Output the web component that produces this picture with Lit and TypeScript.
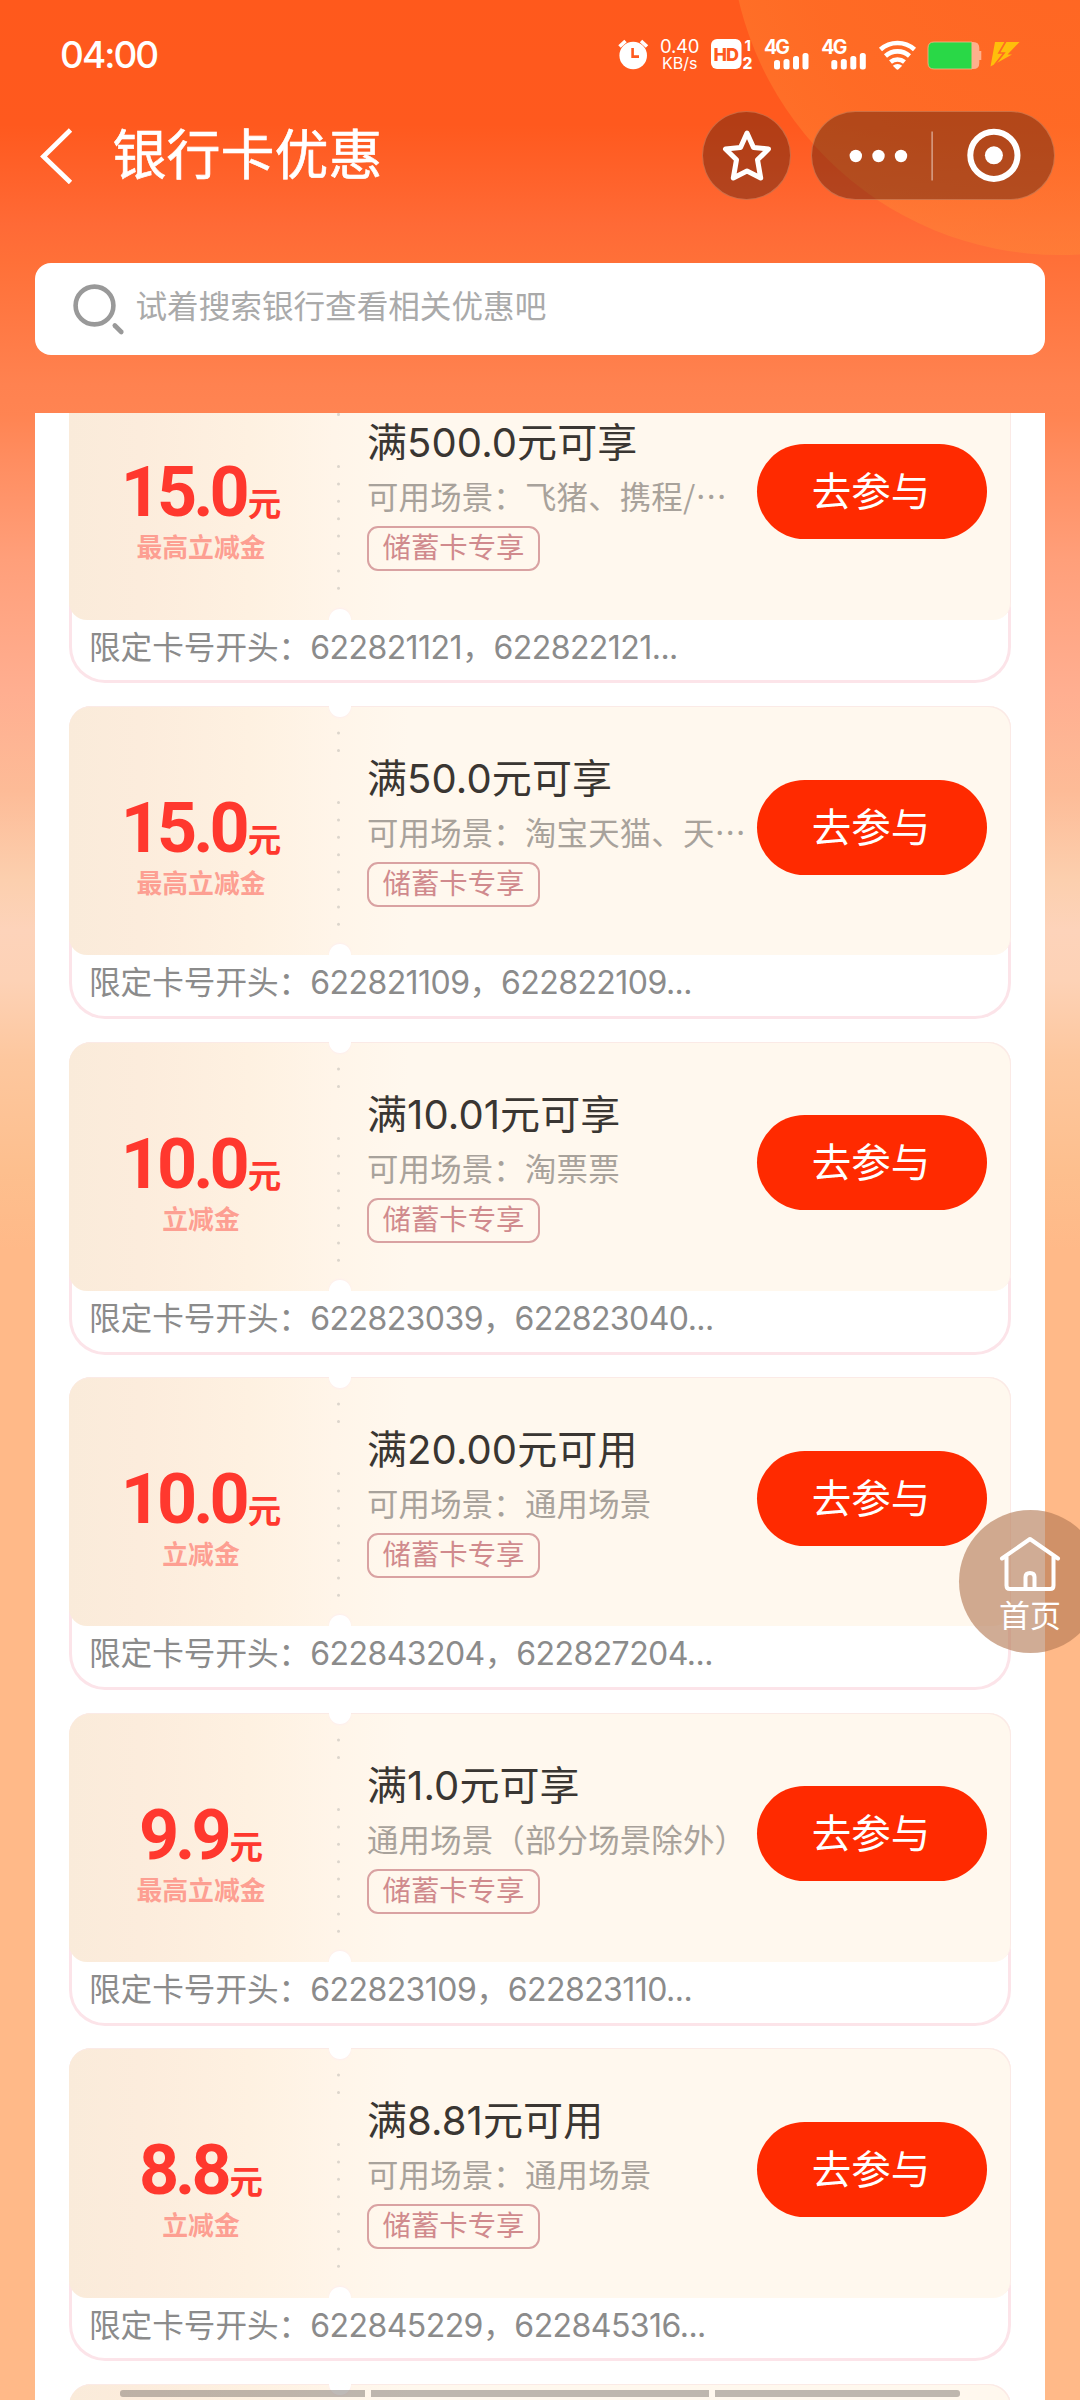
import { LitElement, html, css, svg } from "lit";
import { customElement, property } from "lit/decorators.js";

interface Coupon {
  amount: string;
  label: string;
  title: string;
  scene: string;
  cards: string;
}

const coupons: Coupon[] = [
  { amount: "15.0", label: "最高立减金", title: "满500.0元可享", scene: "可用场景：飞猪、携程/…", cards: "622821121，622822121..." },
  { amount: "15.0", label: "最高立减金", title: "满50.0元可享", scene: "可用场景：淘宝天猫、天…", cards: "622821109，622822109..." },
  { amount: "10.0", label: "立减金", title: "满10.01元可享", scene: "可用场景：淘票票", cards: "622823039，622823040..." },
  { amount: "10.0", label: "立减金", title: "满20.00元可用", scene: "可用场景：通用场景", cards: "622843204，622827204..." },
  { amount: "9.9", label: "最高立减金", title: "满1.0元可享", scene: "通用场景（部分场景除外）", cards: "622823109，622823110..." },
  { amount: "8.8", label: "立减金", title: "满8.81元可用", scene: "可用场景：通用场景", cards: "622845229，622845316..." },
];

const dotRows = [27, 44.4, 96.5, 113.9, 131.3, 148.7, 166.1, 183.5, 200.9, 218.3];

@customElement("coupon-card")
export class CouponCard extends LitElement {
  @property({ attribute: false }) coupon?: Coupon;

  static styles = css`
    :host {
      display: block;
      flex: none;
      height: 313px;
      box-sizing: border-box;
      border-radius: 22px 22px 36px 36px;
      background: #fff;
      box-shadow: inset 0 0 0 3px #fce4e9;
    }
    .ticket {
      position: relative;
      display: flex;
      height: 249.3px;
      border-radius: 22px 22px 18px 18px;
      background: linear-gradient(90deg, #faebda 0, #fcecdc 70px, #fef1e1 180px, #fff5e9 265px, #fff8ee 340px, #fff8ee 100%);
      box-shadow: inset -1px 1px 0 #fbeae6;
    }
    .ticket::before,
    .ticket::after {
      content: "";
      position: absolute;
      left: 260px;
      width: 22px;
      height: 11px;
      background: #fff;
    }
    .ticket::before { top: 0; border-radius: 0 0 11px 11px; box-shadow: 0 1px 2px #fdeeee; }
    .ticket::after { bottom: 0; border-radius: 11px 11px 0 0; box-shadow: 0 -1px 2px #fdeeee; }
    .value {
      width: 264px;
      flex: none;
      display: flex;
      flex-direction: column;
      align-items: center;
      padding-top: 86px;
      box-sizing: border-box;
    }
    .amount {
      display: flex;
      align-items: baseline;
      height: 72px;
      color: #ff382e;
      font: 700 70px/72px Roboto, "Noto Sans CJK SC", sans-serif;
      letter-spacing: -4px;
    }
    .yuan { font: 700 33.5px/72px "Noto Sans CJK SC", sans-serif; letter-spacing: 0; margin-left: 2px; }
    .label {
      font: 700 25.8px/40px Inter, "Noto Sans CJK SC", sans-serif;
      color: #fd9f92;
    }
    .perf { width: 10px; flex: none; margin-right: 24px; }
    .info {
      flex: 1;
      min-width: 0;
      display: flex;
      flex-direction: column;
      align-items: flex-start;
      padding-top: 48px;
      white-space: nowrap;
    }
    .title { font: 400 40px/50px Inter, "Noto Sans CJK SC", sans-serif; color: #3a3632; letter-spacing: 0.1px; }
    .scene { font: 400 31.4px/46px "Noto Sans CJK SC", sans-serif; color: #a8a29b; margin-top: 5px; letter-spacing: 0.2px; }
    .tag {
      margin-top: 7px;
      height: 45px;
      width: 173px;
      box-sizing: border-box;
      border: 2px solid #d9a2a2;
      border-radius: 11px;
      text-align: center;
      font: 400 28.4px/40px Inter, "Noto Sans CJK SC", sans-serif;
      color: #d08a8d;
    }
    .join {
      flex: none;
      margin: 73.6px 23.5px 0 0;
      width: 230px;
      height: 95px;
      border: 0;
      padding: 1px 2px 0 0;
      border-radius: 47.5px;
      background: #ff2a00;
      color: #fff;
      font: 400 39.5px/94px Inter, "Noto Sans CJK SC", sans-serif;
    }
    .foot {
      padding-left: 20px;
      font: 400 31.6px/56px Inter, "Noto Sans CJK SC", sans-serif;
      color: #8b8b8b;
      white-space: nowrap;
    }
    .num { font-size: 32px; letter-spacing: -0.55px; }
  `;

  render() {
    const c = this.coupon;
    if (!c) return html`<div class="ticket"></div>`;
    return html`
      <div class="ticket">
        <div class="value">
          <div class="amount">${c.amount}<span class="yuan">元</span></div>
          <div class="label">${c.label}</div>
        </div>
        <svg class="perf" viewBox="0 0 10 249" width="10" height="249">
          ${dotRows.map((y) => svg`<circle cx="5.5" cy=${y} r="1.5" fill="#dcd5cc" />`)}
        </svg>
        <div class="info">
          <div class="title">${c.title}</div>
          <div class="scene">${c.scene}</div>
          <div class="tag">储蓄卡专享</div>
        </div>
        <button class="join">去参与</button>
      </div>
      <div class="foot">限定卡号开头：<span class="num">${c.cards}</span></div>
    `;
  }
}

@customElement("app-root")
export class AppRoot extends LitElement {
  static styles = css`
    :host {
      display: block;
      position: relative;
      width: 1080px;
      height: 2400px;
      overflow: hidden;
      font-family: Inter, "Noto Sans CJK SC", sans-serif;
      background: linear-gradient(180deg, #ff591c 0, #ff591e 125px, #ff6a36 225px, #ff7038 262px, #ff8250 385px, #ff8452 415px, #ff8d60 460px, #ff9f7a 560px, #ffae90 690px, #fdbb97 790px, #fccfae 880px, #fdd3ba 930px, #fdd2b6 980px, #fdc79e 1060px, #fdbf8e 1170px, #ffb988 1250px, #ffb988 100%);
    }
    .glow {
      position: absolute;
      top: -405px;
      left: 730px;
      width: 660px;
      height: 660px;
      border-radius: 50%;
      background: radial-gradient(circle, rgba(255, 130, 50, 0.3) 0, rgba(255, 135, 50, 0.38) 55%, rgba(255, 150, 60, 0.46) 100%);
    }
    .page { position: relative; display: flex; flex-direction: column; height: 2400px; }
    .status {
      display: flex;
      justify-content: space-between;
      height: 108px;
      padding: 0 0 0 60px;
      color: #fff;
      flex: none;
    }
    .clock { font-size: 37px; font-weight: 500; line-height: 109px; letter-spacing: -2px; }
    .icons { display: block; }
    .nav { display: flex; align-items: center; height: 95px; padding: 0 25px 0 38px; flex: none; color: #fff; }
    .heading { flex: 1; font-size: 54px; line-height: 80px; margin: 0 0 0 36.5px; font-weight: 400; -webkit-text-stroke: 0.6px #fff; }
    .round, .capsule {
      height: 89px;
      box-sizing: border-box;
      border: 1px solid rgba(255, 190, 150, 0.35);
      background: rgba(75, 25, 10, 0.42);
      border-radius: 45px;
      display: flex;
      align-items: center;
      justify-content: center;
    }
    .round { width: 89px; margin-right: 19.5px; }
    .capsule { width: 244.5px; }
    .search {
      flex: none;
      display: flex;
      align-items: center;
      height: 92px;
      margin: 60px 35px 58px;
      padding-left: 36px;
      box-sizing: border-box;
      background: #fff;
      border-radius: 16px;
      font-size: 31.6px;
      color: #aaa;
    }
    .hint { margin-left: 8.5px; line-height: 40px; padding-bottom: 4px; }
    .panel { flex: 1; min-height: 0; margin: 0 35px; background: #fff; overflow: hidden; }
    .list { display: flex; flex-direction: column; gap: 22.6px; margin: -42.6px 34.5px 0 34px; }
    .home {
      position: absolute;
      left: 959px;
      top: 1510px;
      width: 143px;
      height: 143px;
      border-radius: 50%;
      background: rgba(179, 121, 84, 0.62);
      color: #fff;
      display: flex;
      flex-direction: column;
      align-items: center;
      padding: 24px 1px 0 0;
      box-sizing: border-box;
      font-size: 31px;
      line-height: 44px;
    }
    .gesture { position: absolute; left: 120px; top: 2390px; display: flex; gap: 6px; }
    .gesture i { height: 7px; width: 245px; background: rgba(125, 118, 112, 0.5); }
    .gesture i:first-child { border-radius: 3px 0 0 3px; }
    .gesture i:last-child { border-radius: 0 3px 3px 0; }
    .gesture .mid { width: 338px; }
    .icons text { font-family: Inter, sans-serif; }
  `;

  private signal(x: number) {
    return svg`<g transform="translate(${x} 0)">
      <text x="-1" y="53.5" font-size="19.5" font-weight="700" textLength="26">4G</text>
      <rect x="9" y="60" width="6" height="9.5" rx="2.5" />
      <rect x="18.5" y="59" width="6" height="10.5" rx="2.5" />
      <rect x="28" y="56" width="6" height="13.5" rx="2.5" />
      <rect x="37.5" y="53" width="6" height="16.5" rx="2.5" />
    </g>`;
  }

  render() {
    return html`
      <div class="glow"></div>
      <div class="page">
        <div class="status">
          <div class="clock">04:00</div>
          <svg class="icons" width="480" height="108" viewBox="600 0 480 108" fill="#fff">
            <circle cx="633.2" cy="55.5" r="13.8" />
            <path d="M619.5 46.5l6-5.500M647 46.5l-6-5.500" stroke="#fff" stroke-width="3.6" />
            <path d="M632.6 48v8.6h6.4" fill="none" stroke="#ff5a1e" stroke-width="2.6" />
            <text x="660" y="53" font-size="18.5" font-weight="400" textLength="39.5">0.40</text>
            <text x="662" y="69" font-size="16" font-weight="400" textLength="35.5">KB/s</text>
            <rect x="711" y="39" width="30.5" height="30" rx="6" />
            <text x="713.5" y="60.5" font-size="18" font-weight="800" textLength="25.5" style="fill:#ff5a1e">HD</text>
            <text x="744.5" y="51" font-size="15" font-weight="700">1</text>
            <text x="742.5" y="68.5" font-size="15.5" font-weight="800">2</text>
            ${this.signal(765)}${this.signal(822.3)}
            <g fill="none" stroke="#fff" stroke-width="4.6">
              <path d="M880.500 49.500a25.500 25.500 0 0 1 34 0" />
              <path d="M885.500 56a18 18 0 0 1 24 0" />
              <path d="M890.500 62a11 11 0 0 1 14 0" />
            </g>
            <path d="M892.800 65.800a7 7 0 0 1 9.400 0l-3.400 3.300q-1.300 1.200-2.600 0z" />
            <path d="M934 42h38v27h-38q-6 0-6-6v-15q0-6 6-6z" fill="#29d847" stroke="#f5b78a" stroke-width=".8" />
            <path d="M971.800 42h1.500q6 0 6 6v3h2v9h-2v3q0 6-6 6h-1.500z" fill="#ffb08c" />
            <path d="M995 42h24.500l-12 12.500h4.500l-21.500 12z" fill="#ffbe0b" />
            <path d="M1006 41l-7 12h5l-9.500 12" fill="none" stroke="#ff6a24" stroke-width="1.700" />
          </svg>
        </div>
        <div class="nav">
          <svg width="38" height="56" viewBox="0 0 38 56" fill="none" stroke="#fff" stroke-width="4.800">
            <path d="M32.500 2L5.500 28.500l27 26" />
          </svg>
          <h1 class="heading">银行卡优惠</h1>
          <div class="round">
            <svg width="56" height="56" viewBox="0 0 56 56" fill="none" stroke="#fff" stroke-width="5" stroke-linejoin="round">
              <path d="M28 5l6.500 14.500 15 1.500-11 10.800 3.200 18.200-13.700-7-13.700 7 3.200-18.200-11-10.800 15-1.500z" />
            </svg>
          </div>
          <div class="capsule">
            <svg width="242" height="87" viewBox="812 112 242 87" fill="#fff">
              <circle cx="855.8" cy="156" r="6.200" />
              <circle cx="878.500" cy="156" r="6.200" />
              <circle cx="901" cy="156" r="6.200" />
              <rect x="931.500" y="131.500" width="1.200" height="49" opacity=".6" />
              <circle cx="993.900" cy="155.300" r="23.600" fill="none" stroke="#fff" stroke-width="6" />
              <circle cx="993.900" cy="155.300" r="9" />
            </svg>
          </div>
        </div>
        <div class="search">
          <svg width="56" height="56" viewBox="71 281 56 56" fill="none" stroke="#999" stroke-width="4.600" stroke-linecap="round">
            <circle cx="94.500" cy="305.500" r="18.900" />
            <path d="M114.800 325.500l6.500 6.500" />
          </svg>
          <span class="hint">试着搜索银行查看相关优惠吧</span>
        </div>
        <div class="panel">
          <div class="list">
            ${coupons.map((c) => html`<coupon-card .coupon=${c}></coupon-card>`)}
            <coupon-card></coupon-card>
          </div>
        </div>
      </div>
      <div class="home">
        <svg width="64" height="60" viewBox="0 0 64 60" fill="none" stroke="#fff" stroke-width="4" stroke-linejoin="round" stroke-linecap="round">
          <path d="M4 24.500L32 5l28 19.500M8.500 23v28.500q0 3.500 3.500 3.500h40q3.500 0 3.500-3.500V23" />
          <path d="M27.500 54V43q0-4 4.500-4t4.500 4v11" />
        </svg>
        <span>首页</span>
      </div>
      <div class="gesture"><i></i><i class="mid"></i><i></i></div>
    `;
  }
}
